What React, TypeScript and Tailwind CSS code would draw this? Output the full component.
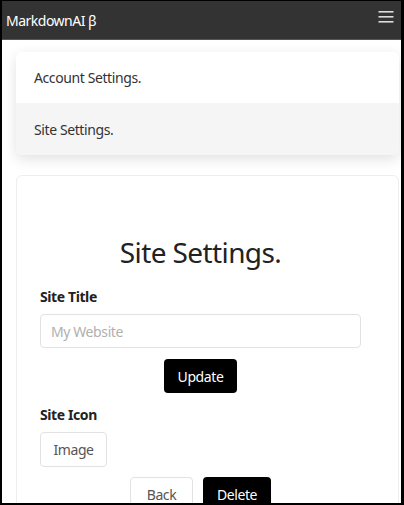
import React from "react";

export default function App() {
  return (
    <div
      className="h-[505px] w-[404px] overflow-hidden border-l-2 border-t border-r-[3px] border-b-2 border-black bg-white tracking-[-0.4px]"
      style={{ fontFamily: '"Noto Sans", "Open Sans", sans-serif' }}
    >
      <header className="flex h-[39px] items-center justify-between bg-[#333333] pl-[4px] pr-[7px] border-b border-[#555]">
        <span className="text-[14px] tracking-[-0.5px] text-white">MarkdownAI β</span>
        <svg width="16" height="14" viewBox="0 0 16 14" className="mb-[6px]">
          <rect x="0.5" y="1" width="15" height="1.6" fill="#dcdcdc" />
          <rect x="0.5" y="6" width="15" height="1.6" fill="#dcdcdc" />
          <rect x="0.5" y="11" width="15" height="1.6" fill="#dcdcdc" />
        </svg>
      </header>

      <div className="ml-[14px] mr-[2px] mt-[12px] overflow-hidden rounded-md shadow-[0_4px_14px_rgba(0,0,0,0.12)]">
        <div className="flex h-[51px] items-center bg-white pl-[18px] text-[14px] text-[#333]">
          Account Settings.
        </div>
        <div className="flex h-[52px] items-center bg-[#f5f5f5] pl-[18px] text-[14px] text-[#333]">
          Site Settings.
        </div>
      </div>

      <div className="ml-[14px] mr-[2px] mt-[20px] h-[400px] rounded-t-md border border-[#eeeeee] pt-[56px]">
        <div className="pl-[23px] pr-[37px]">
          <h1 className="w-[321px] text-center text-[28px] leading-[40px] tracking-[-0.6px] text-[#222]">
            Site Settings.
          </h1>
          <label className="mt-[15px] block text-[14px] font-bold leading-[20px] text-[#222]">Site Title</label>
          <input
            className="mt-[7px] block h-[34px] w-[321px] rounded border border-[#e2e2e2] px-[10px] text-[14px] placeholder:text-[#b0b0b0] outline-none"
            placeholder="My Website"
          />
          <div className="mt-[11px] flex w-[321px] justify-center">
            <button className="h-[34px] w-[73px] rounded bg-black text-[14px] text-white">Update</button>
          </div>
          <label className="mt-[12px] block text-[14px] font-bold leading-[20px] text-[#222]">Site Icon</label>
          <button className="mt-[7px] h-[35px] w-[67px] rounded border border-[#e2e2e2] bg-white text-[14px] text-[#555]">
            Image
          </button>
          <div className="mt-[10px] flex w-[321px] justify-center gap-[10px]">
            <button className="h-[34px] w-[63px] rounded border border-[#e2e2e2] bg-white text-[14px] text-[#555]">
              Back
            </button>
            <button className="h-[34px] w-[68px] rounded bg-black text-[14px] text-white">Delete</button>
          </div>
        </div>
      </div>
    </div>
  );
}
